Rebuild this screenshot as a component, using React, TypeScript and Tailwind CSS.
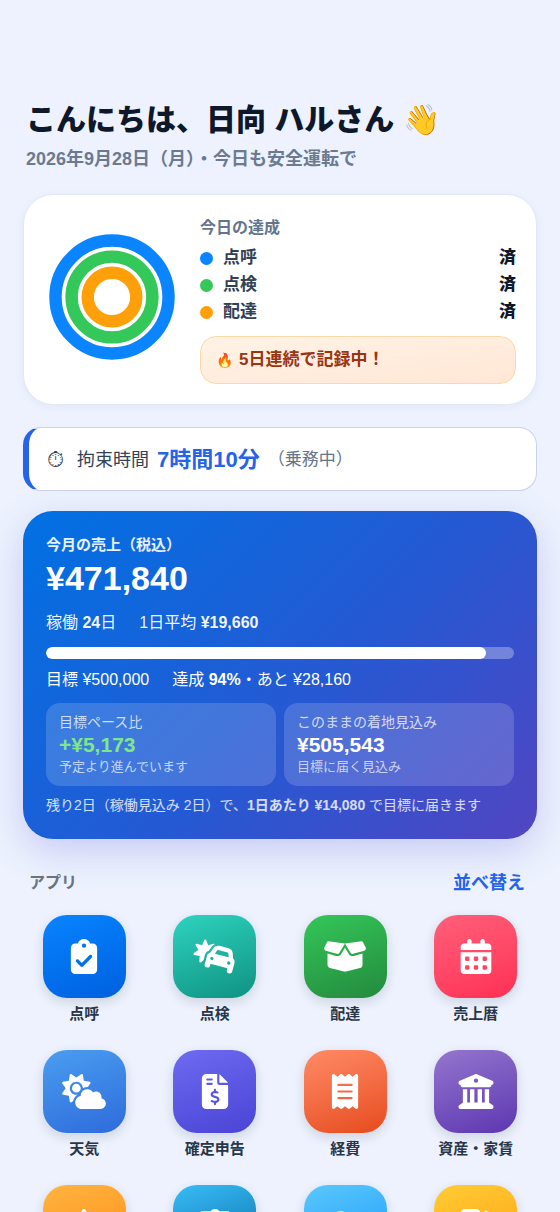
import React from 'react';
import type { IconType } from 'react-icons';
import {
  FaBell, FaBoxOpen, FaBuildingColumns, FaCalendarDays, FaCarBurst, FaClipboardCheck,
  FaCloud, FaCloudSun, FaFileInvoiceDollar, FaGasPump, FaReceipt, FaScaleBalanced,
} from 'react-icons/fa6';

interface Goal {
  name: string;
  status: string;
  color: string;
  dot: string;
  radius: number;
}

interface AppItem {
  name: string;
  icon: IconType;
  tile: string;
}

const GOALS: Goal[] = [
  { name: '点呼', status: '済', color: '#0a84ff', dot: 'bg-[#0a84ff]', radius: 56.5 },
  { name: '点検', status: '済', color: '#34c759', dot: 'bg-[#34c759]', radius: 40.4 },
  { name: '配達', status: '済', color: '#ff9f0a', dot: 'bg-[#ff9f0a]', radius: 24.3 },
];

const APPS: AppItem[] = [
  { name: '点呼', icon: FaClipboardCheck, tile: 'from-[#0a84ff] to-[#0060df]' },
  { name: '点検', icon: FaCarBurst, tile: 'from-[#2dd4bf] to-[#0f9282]' },
  { name: '配達', icon: FaBoxOpen, tile: 'from-[#34c759] to-[#248a3d]' },
  { name: '売上暦', icon: FaCalendarDays, tile: 'from-[#ff5e7a] to-[#ff2d55]' },
  { name: '天気', icon: FaCloudSun, tile: 'from-[#4a9df0] to-[#2f6bdb]' },
  { name: '確定申告', icon: FaFileInvoiceDollar, tile: 'from-[#6e6af0] to-[#4b43d6]' },
  { name: '経費', icon: FaReceipt, tile: 'from-[#ff8a65] to-[#e64a19]' },
  { name: '資産・家賃', icon: FaBuildingColumns, tile: 'from-[#9575cd] to-[#5e35b1]' },
  { name: '通知', icon: FaBell, tile: 'from-[#ffb340] to-[#ff8c00]' },
  { name: '比較', icon: FaScaleBalanced, tile: 'from-[#38bdf8] to-[#0369a1]' },
  { name: 'クラウド', icon: FaCloud, tile: 'from-[#5ac8fa] to-[#0a95ff]' },
  { name: '給油', icon: FaGasPump, tile: 'from-[#ffcc33] to-[#ff9f0a]' },
];

const SALES_RATE = 94;

const Rings: React.FC = () => (
  <svg viewBox="0 0 126 126" className="mt-[18px] size-[126px] shrink-0" aria-hidden="true">
    {GOALS.map(g => (
      <circle key={g.name} cx="63" cy="63" r={g.radius} fill="none" stroke={g.color} strokeWidth="12.4" />
    ))}
  </svg>
);

const AchievementCard: React.FC = () => (
  <section className="flex items-start gap-[25px] rounded-[30px] border border-[#e4e8f4] bg-white pt-[21px] pr-5 pb-5 pl-[25px] shadow-[0_2px_8px_rgba(30,41,90,0.05)]">
    <Rings />
    <div className="min-w-0 flex-1">
      <h2 className="text-base leading-6 font-bold text-[#64748b]">今日の達成</h2>
      <ul className="mt-1.5 flex flex-col gap-[3px]">
        {GOALS.map(g => (
          <li key={g.name} className="flex items-center gap-2.5 text-[17px] leading-6">
            <span className={`size-[13px] rounded-full ${g.dot}`} />
            <span className="flex-1 font-semibold text-[#334155]">{g.name}</span>
            <span className="font-black text-[#0f172a]">{g.status}</span>
          </li>
        ))}
      </ul>
      <p className="mt-3 flex items-center gap-1.5 rounded-2xl border border-[#fcd9a8] bg-linear-to-br from-[#fff3e6] to-[#ffe7d6] px-[15px] py-2.5 text-[17px] leading-[26px] font-bold text-[#9a3412]">
        <span className="text-sm leading-6">🔥</span>
        <span>5日連続で記録中！</span>
      </p>
    </div>
  </section>
);

const DutyTimeCard: React.FC = () => (
  <section className="mt-[22px] flex items-center rounded-[18px] border border-l-6 border-[#c9d2e8] border-l-[#2563eb] bg-white px-[18px] pt-4 pb-[14px] leading-8 text-[#334155]">
    <span className="w-[30px] text-[22px]">⏱</span>
    <span className="text-[18px]">拘束時間</span>
    <strong className="ml-2 text-[22px] font-bold text-[#2563eb]">7時間10分</strong>
    <span className="ml-2 text-[17px] text-[#64748b]">（乗務中）</span>
  </section>
);

const SalesCard: React.FC = () => (
  <section className="mt-5 rounded-[30px] bg-linear-135/srgb from-[#0071e3] via-[#2559d3] via-55% to-[#5145c2] px-[23px] pt-[22px] pb-[22px] text-white shadow-[0_12px_36px_rgba(88,86,214,0.25)]">
    <h2 className="text-[15px] leading-6 font-bold text-white/90">今月の売上（税込）</h2>
    <p className="text-[34px] leading-[42px] font-bold">¥471,840</p>
    <p className="mt-3 flex gap-[23px] text-base leading-6 text-white/95">
      <span>稼働 <b>24</b>日</span>
      <span>1日平均 <b>¥19,660</b></span>
    </p>
    <div className="mt-3 h-3 overflow-hidden rounded-full bg-white/30">
      <div className="h-full rounded-full bg-white" style={{ width: `${SALES_RATE}%` }} />
    </div>
    <p className="mt-[9px] flex gap-[23px] text-base leading-6">
      <span>目標 ¥500,000</span>
      <span>達成 <b>{SALES_RATE}%</b>・あと ¥28,160</span>
    </p>
    <div className="mt-[11px] grid grid-cols-2 gap-2">
      <div className="rounded-[14px] bg-white/16 px-[13px] py-[9px]">
        <h3 className="text-sm leading-5 text-white/75">目標ペース比</h3>
        <p className="text-[21px] leading-[25px] font-bold text-[#7ee787]">+¥5,173</p>
        <p className="text-[13px] leading-5 text-white/70">予定より進んでいます</p>
      </div>
      <div className="rounded-[14px] bg-white/16 px-[13px] py-[9px]">
        <h3 className="text-sm leading-5 text-white/75">このままの着地見込み</h3>
        <p className="text-[21px] leading-[25px] font-bold">¥505,543</p>
        <p className="text-[13px] leading-5 text-white/70">目標に届く見込み</p>
      </div>
    </div>
    <p className="mt-[7px] text-sm leading-6 text-white/80">
      残り2日（稼働見込み 2日）で、<b>1日あたり ¥14,080</b> で目標に届きます
    </p>
  </section>
);

const AppGrid: React.FC = () => (
  <section className="mt-7">
    <div className="flex items-center justify-between pr-3 pl-1.5 leading-8">
      <h2 className="text-base font-bold text-[#6b7280]">アプリ</h2>
      <button type="button" className="text-lg leading-8 font-bold text-[#2563eb]">並べ替え</button>
    </div>
    <div className="mt-4 grid grid-cols-4 gap-x-2 gap-y-6">
      {APPS.map(({ name, icon: Icon, tile }) => (
        <button key={name} type="button" className="flex flex-col items-center gap-1">
          <span className={`flex size-[83px] items-center justify-center rounded-3xl bg-linear-160 text-white shadow-[0_4px_12px_rgba(15,23,42,0.14)] ${tile}`}>
            <Icon className="h-[35px] w-11" />
          </span>
          <span className="text-[15px] leading-6 font-semibold text-[#293548]">{name}</span>
        </button>
      ))}
    </div>
  </section>
);

const App: React.FC = () => (
  <main className="min-h-screen bg-[#edf2fe] px-[23px] pt-[98px] pb-8 font-['Liberation_Sans','Noto_Sans_CJK_JP',sans-serif]">
    <header className="mb-[22px] px-[3px]">
      <h1 className="text-[30px] leading-11 font-black text-[#0f172a]">こんにちは、日向 ハルさん 👋</h1>
      <p className="mt-1 text-[18px] leading-[26px] font-semibold text-[#6b7a90]">2026年9月28日（月）・今日も安全運転で</p>
    </header>
    <AchievementCard />
    <DutyTimeCard />
    <SalesCard />
    <AppGrid />
  </main>
);

export default App;
